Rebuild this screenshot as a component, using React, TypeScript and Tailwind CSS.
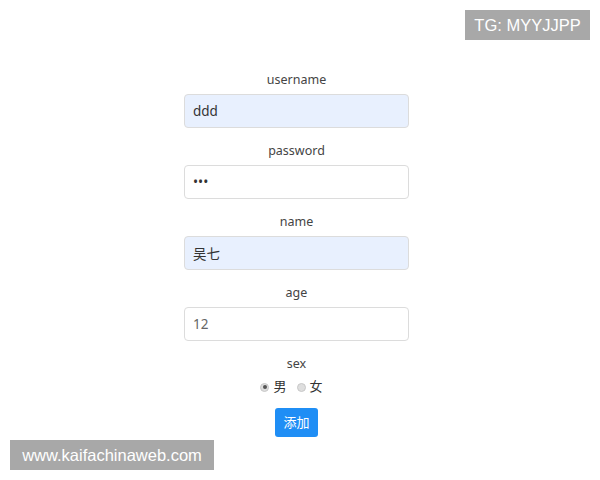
const font = { fontFamily: '"Noto Sans", "Noto Sans CJK SC", sans-serif' };

function Field({ label, value, filled, type = 'text', muted }: { label: string; value: string; filled?: boolean; type?: string; muted?: boolean }) {
  return (
    <div className="flex flex-col items-center mb-[13px]">
      <div className="h-[20px] leading-[20px] text-[12.5px] text-[#444] mb-[4px]">{label}</div>
      <input
        readOnly
        type={type}
        value={value}
        className={`w-[225px] h-[34px] px-[8px] rounded-[4px] border border-[#dcdcdc] text-[13.5px] outline-none ${
          filled ? 'bg-[#e8f0fe]' : 'bg-white'
        } ${muted ? 'text-[#666]' : 'text-[#333]'}`}
        style={font}
      />
    </div>
  );
}

function Radio({ checked, label }: { checked?: boolean; label: string }) {
  return (
    <span className="flex items-center gap-[4px]">
      <span className="w-[9px] h-[9px] rounded-full bg-[#dedede] border border-[#c8c8c8] flex items-center justify-center">
        {checked && <span className="w-[4px] h-[4px] rounded-full bg-[#555]" />}
      </span>
      <span className="text-[13px] text-[#333]">{label}</span>
    </span>
  );
}

export default function App() {
  return (
    <div className="relative w-[600px] h-[480px] bg-white overflow-hidden" style={font}>
      <div className="absolute left-[465px] top-[10px] w-[125px] h-[30px] bg-[#a8a8a8] text-white text-[16.5px] flex items-center justify-center" style={{ fontFamily: '"Liberation Sans", Arial, sans-serif' }}>
        TG: MYYJJPP
      </div>

      <div className="flex justify-center pr-[7px] pt-[70px]">
        <div className="flex flex-col items-center">
          <Field label="username" value="ddd" filled />
          <Field label="password" value="ddd" type="password" />
          <Field label="name" value="吴七" filled />
          <Field label="age" value="12" muted />
          <div className="h-[20px] leading-[20px] text-[12.5px] text-[#444] mb-[4px]">sex</div>
          <div className="h-[18px] flex items-center gap-[10px] pr-[10px]">
            <Radio checked label="男" />
            <Radio label="女" />
          </div>
          <button className="mt-[12px] w-[43px] h-[29px] rounded-[3px] bg-[#1f8ef5] text-white text-[13px]">添加</button>
        </div>
      </div>

      <div className="absolute left-[10px] top-[440px] w-[204px] h-[30px] bg-[#a8a8a8] text-white text-[16.5px] flex items-center justify-center" style={{ fontFamily: '"Liberation Sans", Arial, sans-serif' }}>
        www.kaifachinaweb.com
      </div>
    </div>
  );
}
